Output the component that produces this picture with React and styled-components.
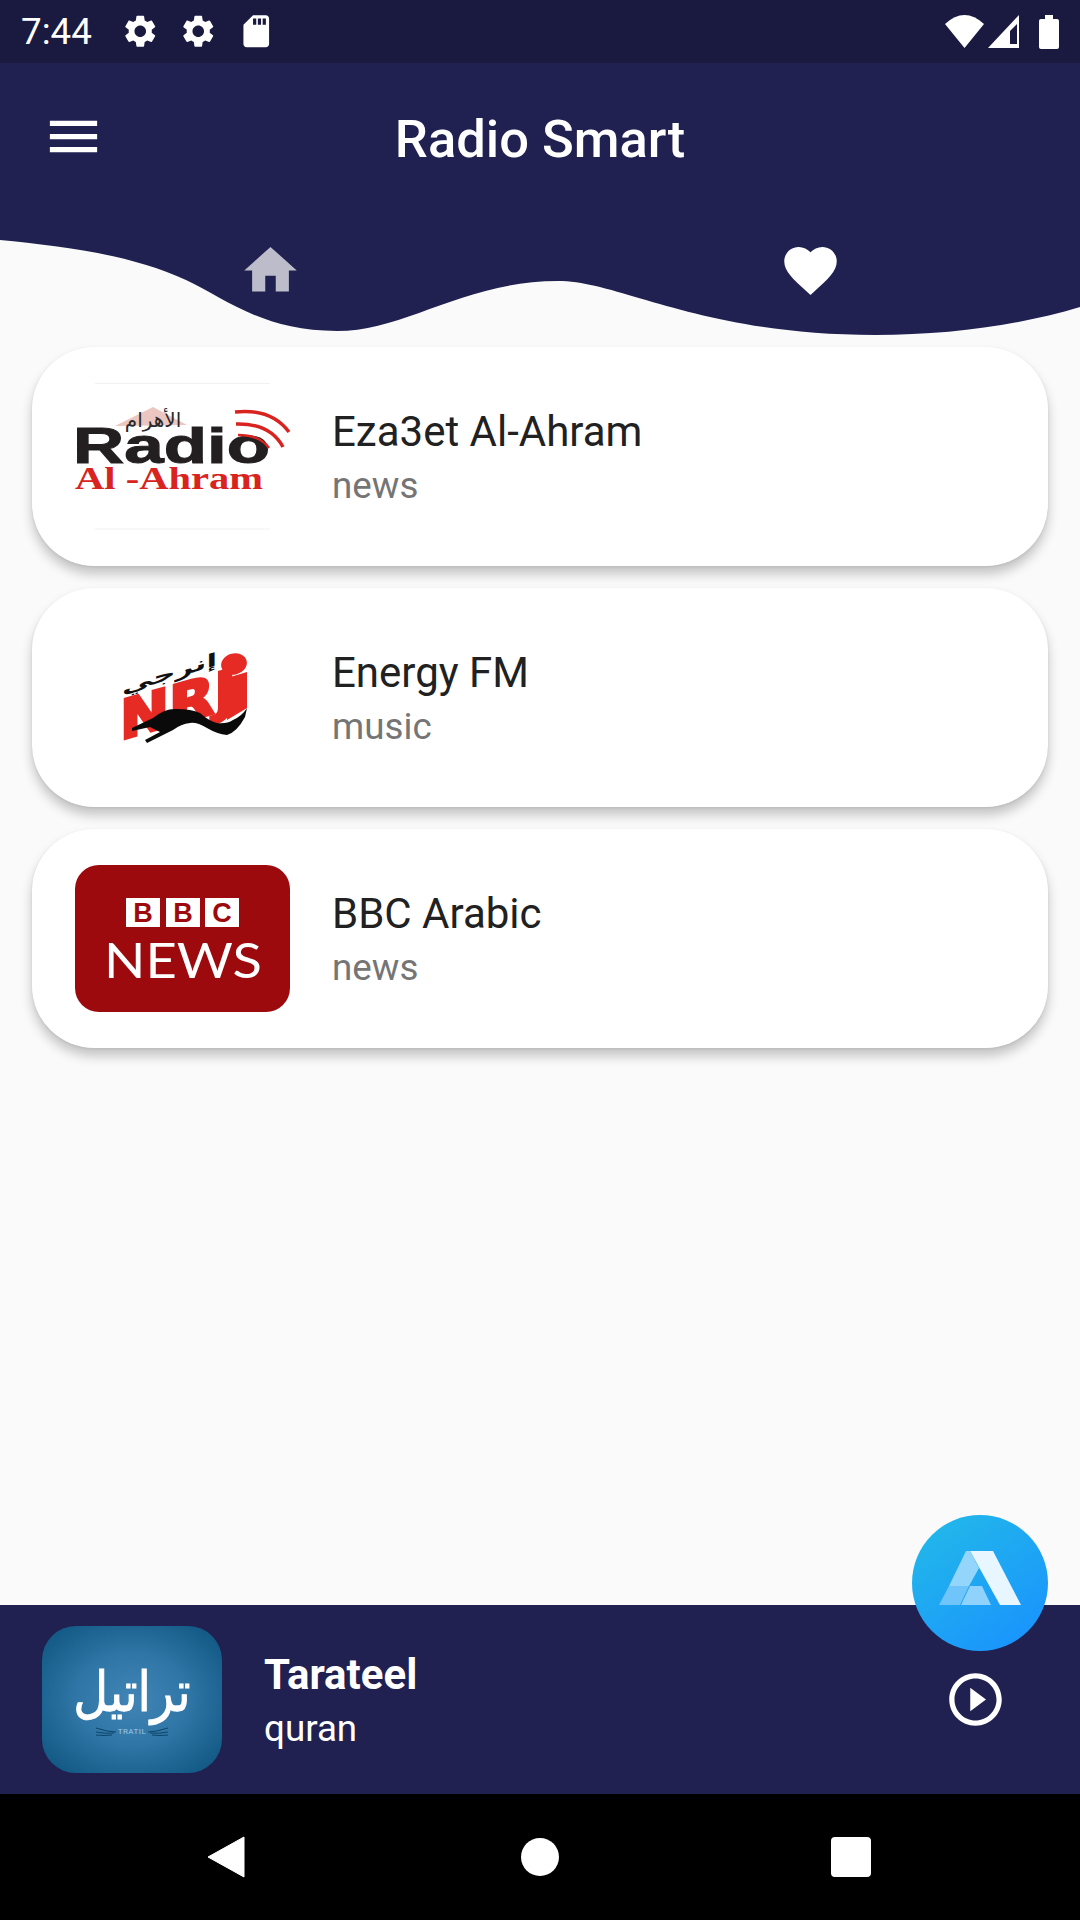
import React from "react";
import styled, { createGlobalStyle } from "styled-components";
import {
  MdSettings,
  MdSdStorage,
  MdMenu,
  MdHome,
  MdFavorite,
  MdPlayCircleOutline,
} from "react-icons/md";

const navy = "#212151";

const GlobalStyle = createGlobalStyle`
  html, body {
    margin: 0;
    padding: 0;
    background: #fafafa;
  }
  * {
    box-sizing: border-box;
  }
`;

const Screen = styled.div`
  position: relative;
  display: flex;
  flex-direction: column;
  width: 1080px;
  height: 1920px;
  overflow: hidden;
  background: #fafafa;
  font-family: Roboto, sans-serif;
`;

const StatusBar = styled.div`
  display: flex;
  align-items: center;
  justify-content: space-between;
  height: 63px;
  padding: 0 21px 0 21px;
  background: #1a1a40;
  color: #fff;
`;

const StatusLeft = styled.div`
  display: flex;
  align-items: center;
  gap: 19.5px;
`;

const Time = styled.span`
  width: 80px;
  font-size: 36.75px;
  line-height: 63px;
`;

const StatusRight = styled.div`
  display: flex;
  align-items: center;
  gap: 20px;
`;

const SignalGroup = styled.div`
  display: flex;
  align-items: center;
  gap: 4px;
`;

const AppBar = styled.header`
  display: grid;
  grid-template-columns: 1fr auto 1fr;
  align-items: center;
  height: 147px;
  padding: 0 42px;
  background: ${navy};
  color: #fff;
`;

const Title = styled.h1`
  margin: 4px 0 0;
  font-size: 52.5px;
  font-weight: 500;
`;

const WaveTabs = styled.nav`
  position: relative;
  display: grid;
  grid-template-columns: 1fr 1fr;
  height: 137px;
  padding-top: 29px;
`;

const WaveShape = styled.svg`
  position: absolute;
  top: 0;
  left: 0;
`;

const Tab = styled.div`
  position: relative;
  display: flex;
  justify-content: center;
  height: 63px;
  color: ${(p) => (p.$active ? "#fff" : "rgba(255,255,255,0.7)")};
`;

const StationList = styled.main`
  display: flex;
  flex: 1;
  flex-direction: column;
  gap: 22px;
  padding: 0 32px;
`;

const Card = styled.article`
  display: flex;
  align-items: center;
  gap: 42px;
  height: 219px;
  padding-left: 43px;
  border-radius: 62px;
  background: #fff;
  box-shadow: 0 8px 12px rgba(0, 0, 0, 0.22), 0 1px 3px rgba(0, 0, 0, 0.08);
`;

const LogoBox = styled.svg`
  flex: none;
  display: block;
  width: 215px;
  height: 147px;
  overflow: visible;
`;

const StationText = styled.div`
  display: flex;
  flex-direction: column;
`;

const StationName = styled.div`
  font-size: 42px;
  line-height: 49px;
  color: #212121;
`;

const StationKind = styled.div`
  margin-top: 8px;
  font-size: 36.75px;
  line-height: 43px;
  color: #757575;
`;

const MiniPlayer = styled.footer`
  display: flex;
  align-items: center;
  gap: 42px;
  height: 189px;
  padding: 0 73px 0 42px;
  background: ${navy};
  color: #fff;
`;

const Artwork = styled.div`
  flex: none;
  display: flex;
  flex-direction: column;
  align-items: center;
  width: 180px;
  height: 147px;
  padding-top: 38px;
  border-radius: 34px;
  background: radial-gradient(ellipse at center, #4085b6 0%, #2f75a5 45%, #0c527d 100%);
`;

const ArtTitle = styled.div`
  font-family: "DejaVu Sans", sans-serif;
  font-size: 48px;
  line-height: 54px;
  color: #fff;
  -webkit-text-stroke: 0.8px #fff;
  transform: scaleY(1.15);
`;

const ArtSub = styled.div`
  display: flex;
  align-items: center;
  gap: 2px;
  margin-top: 9px;
  font-size: 8px;
  line-height: 10px;
  letter-spacing: 0.5px;
  color: #9ccbe8;
`;

const PlayerText = styled.div`
  display: flex;
  flex-direction: column;
`;

const PlayerName = styled.div`
  font-size: 42px;
  font-weight: 700;
  line-height: 49px;
`;

const PlayerKind = styled.div`
  margin-top: 8px;
  font-size: 36.75px;
  line-height: 43px;
`;

const PlayButton = styled.div`
  display: flex;
  margin-left: auto;
`;

const Fab = styled.div`
  position: absolute;
  top: 1515px;
  left: 912px;
  width: 136px;
  height: 136px;
  border-radius: 50%;
  background: linear-gradient(145deg, #22b7ea 10%, #1a94fd 90%);
`;

const FabMark = styled.svg`
  display: block;
  filter: blur(0.7px);
`;

const NavBar = styled.div`
  display: grid;
  grid-template-columns: repeat(3, 1fr);
  align-items: center;
  justify-items: center;
  height: 126px;
  padding: 0 71px;
  background: #000;
`;

const NavBack = styled.svg`
  margin-right: 3px;
`;

const NavCircle = styled.div`
  width: 38px;
  height: 38px;
  border-radius: 50%;
  background: #fff;
`;

const NavSquare = styled.div`
  width: 40px;
  height: 40px;
  margin-right: 4px;
  border-radius: 4px;
  background: #fff;
`;

const Wifi = () => (
  <svg width="39" height="33" viewBox="945 14 39 33">
    <path d="M964.5 47 L945 23 Q964.5 5 984 23 Z" fill="#fff" />
  </svg>
);

const Signal = () => (
  <svg width="31" height="33" viewBox="988 14 31 33">
    <path d="M988 47 L1019 14 V47 Z" fill="#fff" />
    <path d="M1017 23 V43 H1010 V30 Z" fill="#1a1a40" />
  </svg>
);

const Battery = () => (
  <svg width="20" height="34" viewBox="0 0 20 34">
    <path
      d="M6 0 H14 V4 H18 Q20 4 20 6 V32 Q20 34 18 34 H2 Q0 34 0 32 V6 Q0 4 2 4 H6 Z"
      fill="#fff"
    />
  </svg>
);

const Wave = () => (
  <WaveShape width="1080" height="137" viewBox="0 0 1080 137">
    <path
      d="M0 0 V30 C60 36 130 44 186 70 C225 88 262 121 337 121 C405 121 465 71 558 71 C620 71 700 125 875 125 C950 125 1020 115 1080 97 V0 Z"
      fill={navy}
    />
  </WaveShape>
);

const RadioLogo = () => (
  <LogoBox viewBox="0 0 215 147">
    <path d="M20 0.5 H195 M20 146 H195" stroke="#f1f1f1" strokeWidth="1" />
    <path d="M40 43 L78 24 L112 42 Z" fill="#ecc6c1" />
    <text
      x="78"
      y="44"
      textAnchor="middle"
      fontFamily="'DejaVu Sans', sans-serif"
      fontSize="20"
      fill="#2a2a2a"
    >
      الأهرام
    </text>
    <text
      x="-2"
      y="80"
      fontFamily="'Liberation Sans', sans-serif"
      fontWeight="700"
      fontSize="50"
      textLength="197"
      lengthAdjust="spacingAndGlyphs"
      stroke="#231f20"
      strokeWidth="1"
      fill="#231f20"
    >
      Radio
    </text>
    <text
      x="0"
      y="106"
      fontFamily="'Liberation Serif', serif"
      fontWeight="700"
      fontSize="32"
      textLength="188"
      lengthAdjust="spacingAndGlyphs"
      fill="#d8231f"
    >
      Al -Ahram
    </text>
    <g fill="none" stroke="#d8231f" strokeLinecap="butt">
      <path d="M160 29 Q196 25 214 49" strokeWidth="3.5" />
      <path d="M161 41 Q195 40 208 64" strokeWidth="3.5" />
      <path d="M163 52 Q185 52 194 65" strokeWidth="2.5" />
    </g>
  </LogoBox>
);

const NrjLogo = () => (
  <LogoBox viewBox="0 0 215 147">
    <ellipse cx="159" cy="40" rx="13" ry="10.5" fill="#e62a24" transform="rotate(-14 159 40)" />
    <text
      transform="translate(47 70) skewY(-17)"
      fontFamily="'DejaVu Sans', sans-serif"
      fontWeight="700"
      fontSize="18"
      textLength="95"
      lengthAdjust="spacingAndGlyphs"
      fill="#111"
    >
      إنرجي
    </text>
    <text
      transform="translate(45 116) skewY(-16)"
      fontFamily="'DejaVu Sans', sans-serif"
      fontWeight="700"
      fontSize="54"
      textLength="116"
      lengthAdjust="spacingAndGlyphs"
      stroke="#e62a24"
      strokeWidth="3"
      fill="#e62a24"
    >
      NRJ
    </text>
    <path d="M152 54 L172 48 V84 L152 96 Z" fill="#e62a24" />
    <path
      d="M57 104 L78 94 Q90 84 102 85 Q116 85 125 89 Q134 97 142 99 Q152 100 158 96 Q167 92 172 84 L170 93 Q162 108 152 111 Q142 110 132 104 Q122 98 115 99 Q106 100 98 106 L82 114 L72 119 L70 116 L85 108 L75 103 L57 107 Z"
      fill="#0a0a0a"
    />
  </LogoBox>
);

const BbcLogo = () => (
  <LogoBox viewBox="0 0 215 147">
    <rect width="215" height="147" rx="24" fill="#9c0a0e" />
    {[
      ["B", 51],
      ["B", 91],
      ["C", 130],
    ].map(([letter, x]) => (
      <g key={x}>
        <rect x={x} y="33" width="34" height="29" fill="#fff" />
        <text
          x={x + 17}
          y="57"
          textAnchor="middle"
          fontFamily="'Liberation Sans', sans-serif"
          fontWeight="700"
          fontSize="27"
          fill="#9c0a0e"
        >
          {letter}
        </text>
      </g>
    ))}
    <text
      x="29"
      y="113"
      fontFamily="Lato, sans-serif"
      fontSize="48"
      textLength="158"
      lengthAdjust="spacingAndGlyphs"
      fill="#fff"
    >
      NEWS
    </text>
  </LogoBox>
);

const Flourish = ({ $flip }) => (
  <svg
    width="20"
    height="10"
    viewBox="0 0 20 10"
    style={{ transform: $flip ? "scaleX(-1)" : undefined }}
  >
    <path
      d="M0 5 Q8 5 20 1 M2 6 Q10 7 20 5 M4 8 Q12 9 20 8"
      fill="none"
      stroke="#0d4569"
      strokeWidth="1"
    />
  </svg>
);

const stations = [
  { name: "Eza3et Al-Ahram", kind: "news", Logo: RadioLogo },
  { name: "Energy FM", kind: "music", Logo: NrjLogo },
  { name: "BBC Arabic", kind: "news", Logo: BbcLogo },
];

const App = () => (
  <Screen>
    <GlobalStyle />
    <StatusBar>
      <StatusLeft>
        <Time>7:44</Time>
        <MdSettings size={38.5} />
        <MdSettings size={38.5} />
        <MdSdStorage size={38.5} />
      </StatusLeft>
      <StatusRight>
        <SignalGroup>
          <Wifi />
          <Signal />
        </SignalGroup>
        <Battery />
      </StatusRight>
    </StatusBar>

    <AppBar>
      <MdMenu size={63} />
      <Title>Radio Smart</Title>
    </AppBar>

    <WaveTabs>
      <Wave />
      <Tab>
        <MdHome size={63} />
      </Tab>
      <Tab $active>
        <MdFavorite size={63} />
      </Tab>
    </WaveTabs>

    <StationList>
      {stations.map(({ name, kind, Logo }) => (
        <Card key={name}>
          <Logo />
          <StationText>
            <StationName>{name}</StationName>
            <StationKind>{kind}</StationKind>
          </StationText>
        </Card>
      ))}
    </StationList>

    <MiniPlayer>
      <Artwork>
        <ArtTitle>تراتيل</ArtTitle>
        <ArtSub>
          <Flourish $flip />
          TRATIL
          <Flourish />
        </ArtSub>
      </Artwork>
      <PlayerText>
        <PlayerName>Tarateel</PlayerName>
        <PlayerKind>quran</PlayerKind>
      </PlayerText>
      <PlayButton>
        <MdPlayCircleOutline size={63} />
      </PlayButton>
    </MiniPlayer>

    <NavBar>
      <NavBack width="38" height="42" viewBox="0 0 38 42">
        <path d="M37 1 V41 L1 21 Z" fill="#fff" stroke="#fff" strokeWidth="1" strokeLinejoin="round" />
      </NavBack>
      <NavCircle />
      <NavSquare />
    </NavBar>

    <Fab>
      <FabMark width="136" height="136" viewBox="0 0 136 136">
        <path d="M58 36 H81 L109 90 H88 Z" fill="#e8f6ff" />
        <path d="M54 36 H58 L67 53 L57 71 H37 Z" fill="#93d5fb" />
        <path d="M37 71 H57 L48 90 H27 Z" fill="#6fc4f9" />
        <path d="M58 71 H70 L79 90 H49 Z" fill="#8fd2fc" />
      </FabMark>
    </Fab>
  </Screen>
);

export default App;
